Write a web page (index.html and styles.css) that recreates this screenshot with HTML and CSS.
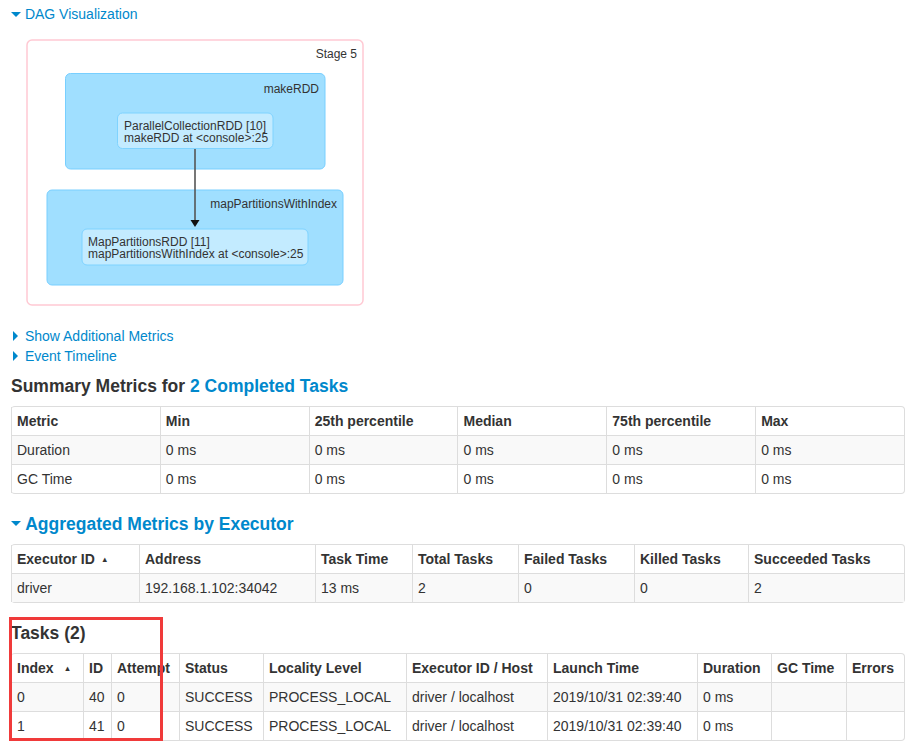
FILE: index.html
```
<!DOCTYPE html>
<html>
<head>
<meta charset="utf-8">
<title>Stage Details</title>
<link rel="stylesheet" href="styles.css">
</head>
<body>
<div class="toggle"><span class="arrow-open"></span> <a href="#">DAG Visualization</a></div>
<svg class="dag" width="360" height="302" viewBox="0 0 360 302" xmlns="http://www.w3.org/2000/svg">
  <g transform="translate(-11,-24)">
    <rect class="stage" x="27" y="40" width="336" height="265" rx="5" ry="5"/>
    <text class="lbl" x="357" y="58" text-anchor="end">Stage 5</text>
    <rect class="cluster" x="65.5" y="73.5" width="259.5" height="95.5" rx="5" ry="5"/>
    <text class="lbl" x="319" y="93" text-anchor="end">makeRDD</text>
    <rect class="node" x="117.5" y="113" width="155.5" height="35.5" rx="5" ry="5"/>
    <text class="lbl" x="124" y="129.5">ParallelCollectionRDD [10]<tspan x="124" dy="12">makeRDD at &lt;console&gt;:25</tspan></text>
    <rect class="cluster" x="47" y="190" width="296" height="95" rx="5" ry="5"/>
    <text class="lbl" x="337" y="208" text-anchor="end">mapPartitionsWithIndex</text>
    <rect class="node" x="82" y="229" width="226" height="36" rx="5" ry="5"/>
    <text class="lbl" x="88" y="245.5">MapPartitionsRDD [11]<tspan x="88" dy="12">mapPartitionsWithIndex at &lt;console&gt;:25</tspan></text>
    <line class="edge" x1="195" y1="149" x2="195" y2="221"/>
    <polygon class="head" points="190.5,220 199.5,220 195,227"/>
  </g>
</svg>
<div class="toggle"><span class="arrow-closed"></span> <a href="#">Show Additional Metrics</a></div>
<div class="toggle"><span class="arrow-closed"></span> <a href="#">Event Timeline</a></div>

<h4>Summary Metrics for <a href="#">2 Completed Tasks</a></h4>
<table class="grid summary">
  <thead>
    <tr><th>Metric</th><th>Min</th><th>25th percentile</th><th>Median</th><th>75th percentile</th><th>Max</th></tr>
  </thead>
  <tbody>
    <tr><td>Duration</td><td>0 ms</td><td>0 ms</td><td>0 ms</td><td>0 ms</td><td>0 ms</td></tr>
    <tr><td>GC Time</td><td>0 ms</td><td>0 ms</td><td>0 ms</td><td>0 ms</td><td>0 ms</td></tr>
  </tbody>
</table>

<h4><span class="arrow-open big"></span> <a href="#">Aggregated Metrics by Executor</a></h4>
<table class="grid exec">
  <thead>
    <tr><th class="e1">Executor ID&nbsp;&nbsp;<span class="sort">&#x25B4;</span></th><th class="e2">Address</th><th class="e3">Task Time</th><th class="e4">Total Tasks</th><th class="e5">Failed Tasks</th><th class="e6">Killed Tasks</th><th>Succeeded Tasks</th></tr>
  </thead>
  <tbody>
    <tr><td>driver</td><td>192.168.1.102:34042</td><td>13 ms</td><td>2</td><td>0</td><td>0</td><td>2</td></tr>
  </tbody>
</table>

<div class="tasks-section">
  <h4>Tasks (2)</h4>
  <table class="grid tasks">
    <thead>
      <tr><th class="t1">Index&nbsp;&nbsp;&nbsp;<span class="sort">&#x25B4;</span></th><th class="t2">ID</th><th class="t3">Attempt</th><th class="t4">Status</th><th class="t5">Locality Level</th><th class="t6">Executor ID / Host</th><th class="t7">Launch Time</th><th class="t8">Duration</th><th class="t9">GC Time</th><th>Errors</th></tr>
    </thead>
    <tbody>
      <tr><td>0</td><td>40</td><td>0</td><td>SUCCESS</td><td>PROCESS_LOCAL</td><td>driver / localhost</td><td>2019/10/31 02:39:40</td><td>0 ms</td><td></td><td></td></tr>
      <tr><td>1</td><td>41</td><td>0</td><td>SUCCESS</td><td>PROCESS_LOCAL</td><td>driver / localhost</td><td>2019/10/31 02:39:40</td><td>0 ms</td><td></td><td></td></tr>
    </tbody>
  </table>
  <div class="annot"></div>
</div>
</body>
</html>
```
FILE: styles.css
```
html, body {
  background: #fff;
}
body {
  margin: 0;
  padding: 4px 8px 0 11px;
  font-family: "Liberation Sans", Arial, sans-serif;
  font-size: 14px;
  line-height: 20px;
  color: #333;
}
a {
  color: #0088cc;
  text-decoration: none;
}
.toggle {
  height: 20px;
  white-space: nowrap;
}
.arrow-open {
  display: inline-block;
  width: 0;
  height: 0;
  border-left: 5px solid transparent;
  border-right: 5px solid transparent;
  border-top: 5px solid #0088cc;
  margin-bottom: 2px;
}
.arrow-open.big {
  margin-bottom: 4px;
}
.arrow-closed {
  display: inline-block;
  width: 0;
  height: 0;
  border-top: 5px solid transparent;
  border-bottom: 5px solid transparent;
  border-left: 5px solid #0088cc;
  margin-left: 2px;
  margin-right: 3px;
}
.dag {
  display: block;
}
.dag .stage {
  fill: #fff;
  stroke: #ffc9d3;
  stroke-width: 1.5;
}
.dag .cluster {
  fill: #a0dfff;
  stroke: #78cfff;
  stroke-width: 1;
}
.dag .node {
  fill: #c3ebff;
  stroke: #7fd3ff;
  stroke-width: 1;
}
.dag .lbl {
  font-family: "Liberation Sans", Arial, sans-serif;
  font-size: 12px;
  fill: #333;
}
.dag .edge {
  stroke: #555;
  stroke-width: 1.6;
}
.dag .head {
  fill: #111;
}
h4 {
  margin: 10px 0;
  font-size: 17.5px;
  line-height: 20px;
  font-weight: bold;
  color: #333;
}
.grid {
  width: 100%;
  table-layout: fixed;
  border-collapse: separate;
  border-spacing: 0;
  border: 1px solid #ddd;
  border-left: 0;
  border-radius: 4px;
  margin-bottom: 20px;
}
.grid th, .grid td {
  box-sizing: border-box;
  height: 28px;
  padding: 4px 5px;
  line-height: 20px;
  text-align: left;
  vertical-align: top;
  border-left: 1px solid #ddd;
  border-top: 1px solid #ddd;
  white-space: nowrap;
  overflow: visible;
}
.grid tbody td {
  height: 29px;
}
.grid thead tr:first-child th {
  border-top: 0;
}
.grid th {
  font-weight: bold;
}
.grid tbody tr:nth-child(odd) td {
  background: #f9f9f9;
}
.sort {
  font-family: "DejaVu Sans", sans-serif;
  font-size: 9px;
  font-weight: normal;
  line-height: 0;
  vertical-align: 2px;
}
.e1 { width: 128px; }
.e2 { width: 176px; }
.e3 { width: 97px; }
.e4 { width: 106px; }
.e5 { width: 116px; }
.e6 { width: 114px; }
.t1 { width: 72px; }
.t2 { width: 28px; }
.t3 { width: 68px; }
.t4 { width: 84px; }
.t5 { width: 143px; }
.t6 { width: 141px; }
.t7 { width: 150px; }
.t8 { width: 74px; }
.t9 { width: 75px; }
.tasks-section {
  position: relative;
}
.annot {
  position: absolute;
  left: -2px;
  top: -6px;
  width: 154px;
  height: 124px;
  box-sizing: border-box;
  border: 3px solid #f03a3a;
}
```
